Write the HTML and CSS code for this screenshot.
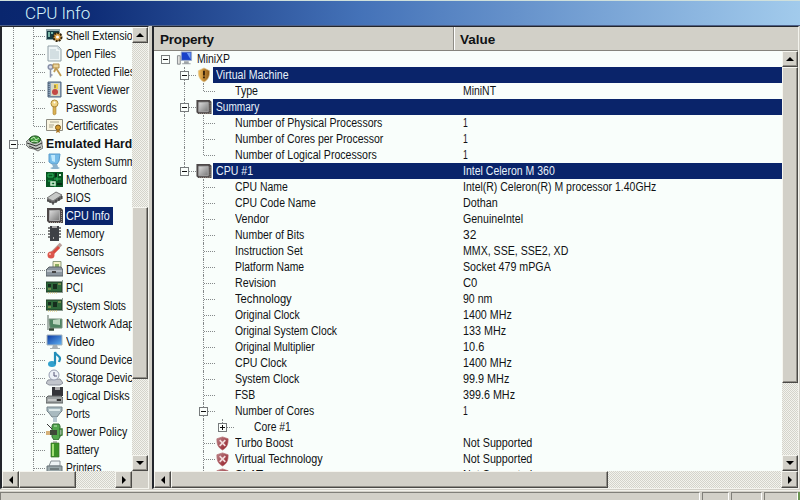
FILE: index.html
```html
<!DOCTYPE html>
<html lang="en">
<head>
  <meta charset="UTF-8" />
  <title>CPU Info</title>
  <link rel="stylesheet" href="styles.css">
</head>
<body>
  <!-- Icon set -->
  <svg class="defs" width="0" height="0">
    <defs>
      <linearGradient id="steel" x2="1" y2="1"><stop stop-color="#ddd"/><stop offset="1" stop-color="#777"/></linearGradient>
      <linearGradient id="blue" x2="1" y2="1"><stop stop-color="#0c38a0"/><stop offset="1" stop-color="#62b4f4"/></linearGradient>
      <linearGradient id="gold" x2="1"><stop stop-color="#f4bd5a"/><stop offset="1" stop-color="#8d5614"/></linearGradient>
      <linearGradient id="red" x2="1" y2="1"><stop stop-color="#b9868c"/><stop offset="1" stop-color="#941820"/></linearGradient>
    </defs>
    <symbol id="shell" viewBox="0 0 17 17"><path d="M0 2h14v11H0z" fill="#8fa5a8"/><path d="M1 4h12v8H1z" fill="#173c42"/><path d="M2 5h2v5H2zM5 5h2v2H5z" fill="#79b6a6"/><circle cx="11.5" cy="10" r="4" fill="#dba047" stroke="#33250d" stroke-width="2" stroke-dasharray="2 1"/><circle cx="11.5" cy="10" r="1.5" fill="#fff"/></symbol>
    <symbol id="files" viewBox="0 0 17 17"><path d="M2 1h10l3 3v12H2z" fill="#eef5f6" stroke="#91a0a6"/><path d="M12 1v3h3M4 5h6M4 7h9M4 9h9M4 11h9M4 13h9" fill="none" stroke="#b8c8ce"/></symbol>
    <symbol id="keys" viewBox="0 0 17 17"><circle cx="4.500" cy="4" r="2.300" fill="#d8dcea" stroke="#8790a8" stroke-width="1.500"/><path d="M4.500 6.500v8M4.500 12h2" stroke="#8790a8" stroke-width="1.500"/><path d="M7 1h6v4H7z" fill="#ead49a" stroke="#b18c48"/><path d="M10 5l5 8M10 5l-2 4" stroke="#c09a50" stroke-width="1.800"/></symbol>
    <symbol id="event" viewBox="0 0 17 17"><path d="M2 1h13v15H2z" fill="#8fa6bd" stroke="#50667f"/><path d="M5 2h9v13H5z" fill="#d9d9c5"/><path d="M3 2v13" stroke="#34445d" stroke-dasharray="1 1"/><path d="M8 3h4v5H8z" fill="#efd14d"/><circle cx="9" cy="11" r="3" fill="#c34845"/><path d="M9 4v3" stroke="#555"/></symbol>
    <symbol id="key" viewBox="0 0 17 17"><circle cx="8.500" cy="4.500" r="3.500" fill="#f0d484" stroke="#ad8a3c"/><path d="M7 8h3v7l-2 1-1-1z" fill="#d9b254" stroke="#a98232" stroke-width=".6"/><circle cx="8.500" cy="3.500" r="1" fill="#fff"/></symbol>
    <symbol id="cert" viewBox="0 0 17 17"><path d="M.5 2.500h16v11H.5z" fill="#f9f4df" stroke="#8d8c81"/><path d="M4 5h9M3 8h5M3 10h4" stroke="#aaa58e"/><circle cx="12" cy="10.500" r="2.500" fill="#d59b2f" stroke="#7b571a"/><path d="M11 12l-1 4 2-1 2 1-1-4" fill="#a97522"/></symbol>
    <symbol id="hardware" viewBox="0 0 17 17"><path d="M0 7l4-4h10l2 4v3l1 3-5 3-4-2-5-1-3-3z" fill="#c3c9c3" stroke="#555" stroke-width=".8"/><path d="M1 8l9 3 6-3M3 11l7 3 5-2" fill="none" stroke="#333"/><ellipse cx="9" cy="4.500" rx="5.500" ry="3.600" fill="#3f9a3a" stroke="#225522"/><path d="M5 4l3-2 2 3 3-2M5 7l3-1 4 1" fill="none" stroke="#c7e8be"/></symbol>
    <symbol id="summary" viewBox="0 0 17 17"><path d="M3 1h11l-1 7-2 3H6L3 9z" fill="#76bce9" stroke="#5a9ccb"/><path d="M5 2h4v7L6 8z" fill="#bfe9fd"/><path d="M6 11h5l1 3 2 1-2 1H6l-2-1 3-1z" fill="#8bb2cd"/></symbol>
    <symbol id="board" viewBox="0 0 17 17"><path d="M0 1h17v15H0z" fill="#075622"/><path d="M2 3h5v3H2zM11 2v8M8 8h7M2 10h4v4M9 13v3" fill="none" stroke="#2bb259"/><path d="M5 11h4v3H5z" fill="none" stroke="#ccebd0" stroke-width="1.500"/><path d="M13 3h2v2h-2z" fill="#ccebd0"/><path d="M9 2h2v4H9zM11 12h5v2h-5z" fill="#042c14"/></symbol>
    <symbol id="bios" viewBox="0 0 17 17"><path d="M1 10L10 4l6 2v4L7 15l-6-3z" fill="#666"/><path d="M1 9l9-6 6 3-9 6z" fill="#c7c9c7" stroke="#777"/><path d="M2 11v2M4 12v2M7 13v3M10 11v3M13 9v3M16 7v3" stroke="#333"/></symbol>
    <symbol id="cpu" viewBox="0 0 17 17"><path d="M1 1h14l2 2v13H3l-2-2z" fill="#4d4848"/><path d="M15.500 4v11M4 15.500h11" stroke="#a59a90" stroke-dasharray="1 1"/><path d="M3.500 3.500h10v10h-10z" fill="url(#steel)" stroke="#aaa"/></symbol>
    <symbol id="memory" viewBox="0 0 17 17"><path d="M4 1h9v15H4z" fill="#3e4145"/><path d="M2 3h2M2 6h2M2 9h2M2 12h2M13 3h2M13 6h2M13 9h2M13 12h2" stroke="#555" stroke-width="1.500"/><path d="M6 1h5v2H6zM7 12h1v2H7z" fill="#aaa"/></symbol>
    <symbol id="sensor" viewBox="0 0 17 17"><path d="M15 1L6 10" stroke="#b9a09a" stroke-width="3.500"/><path d="M13 4l-7 7" stroke="#da4a3e" stroke-width="3"/><circle cx="5" cy="12" r="3.500" fill="#db574d"/><circle cx="4" cy="11" r="1" fill="#ffc0b0"/></symbol>
    <symbol id="device" viewBox="0 0 17 17"><path d="M7 .5h8v8H7z" fill="#f4f2c8" stroke="#8b9b7d"/><path d="M9 3h4v3H9z" fill="#8bac60"/><path d="M1 8l2-2h12l2 3v6H0V9z" fill="#8b969f" stroke="#5b6268"/><path d="M1 10h15" stroke="#e4e8ed"/><path d="M6 10h4v2H6z" fill="#444"/></symbol>
    <symbol id="card" viewBox="0 0 17 17"><path d="M0 3h16v10H0z" fill="#2d683a" stroke="#203b26"/><path d="M2 5h3v3H2zM7 5h4v5H7z" fill="#162d1d"/><path d="M12 5h3M2 10h3" stroke="#bcae62"/><path d="M2 14h10" stroke="#d9c471" stroke-dasharray="1 1"/><path d="M16.500 1v13" stroke="#8d9a93"/></symbol>
    <symbol id="net" viewBox="0 0 17 17"><path d="M2 0v15" stroke="#8c9a93" stroke-width="1.500"/><path d="M3 4h13v9H4z" fill="#4f8462" stroke="#79917f"/><path d="M7 5l7-1v6l-7-1z" fill="#b9d4bd"/><path d="M3 14.500h5" stroke="#343" stroke-width="2.500"/></symbol>
    <symbol id="video" viewBox="0 0 17 17"><path d="M1 2h15v10H1z" fill="url(#blue)" stroke="#a5b3bb"/><path d="M7 12h4l1 3h2v1H4v-1h2z" fill="#a7b0b4"/></symbol>
    <symbol id="sound" viewBox="0 0 17 17"><ellipse cx="6" cy="13" rx="4" ry="3" fill="#30a1ce"/><path d="M9 13V1c1 4 5 3 5 7l-1 3" fill="none" stroke="#238eb9" stroke-width="2.200"/></symbol>
    <symbol id="storage" viewBox="0 0 17 17"><path d="M2 11l12-1 3 4-3 2H3l-3-2z" fill="#c2c6cc" stroke="#8b909b"/><circle cx="8" cy="6" r="5" fill="#edf1f8" stroke="#979eb2"/><path d="M8 3v4h3" stroke="#557" fill="none"/></symbol>
    <symbol id="disk" viewBox="0 0 17 17"><path d="M6 0h11v9H6z" fill="#343539"/><path d="M9 0h5v3H9z" fill="#aaa"/><path d="M0 11l2-2h13l2 2v5H0z" fill="#9da2a2" stroke="#5c6161"/><path d="M2 13h8" stroke="#eee"/><path d="M11 12h4v2h-4z" fill="#333"/></symbol>
    <symbol id="port" viewBox="0 0 17 17"><path d="M1 2h15v4l-2 2-3 4H6L3 8 1 6z" fill="#a8bac0" stroke="#76858b"/><path d="M3 4h11v2H3z" fill="#dce8e9"/><path d="M7 12h4v5H7z" fill="#b4c6cf"/></symbol>
    <symbol id="power" viewBox="0 0 17 17"><path d="M7 1h6l1 2v11l-2 3H8l-2-3V3z" fill="#51a64d" stroke="#326b34"/><path d="M13 6h3v6l-3 1" fill="none" stroke="#397b35" stroke-width="1.500"/><path d="M0 8h5v4H0z" fill="#d6b179"/><path d="M1 1l5 5" stroke="#333"/><path d="M4 7h7v5H4z" fill="#3e4839"/><path d="M8 3h3" stroke="#c4e7bd"/></symbol>
    <symbol id="battery" viewBox="0 0 17 17"><path d="M7 0h4v2H7z" fill="#bbb"/><path d="M5 2h8v14H5z" fill="#3b9228" stroke="#397028" stroke-width=".7"/><path d="M7 3v12" stroke="#a2df76" stroke-width="2"/></symbol>
    <symbol id="printer" viewBox="0 0 17 17"><path d="M5 2h9v5H3z" fill="#edf3f4" stroke="#899196"/><path d="M1 7h15v6H1z" fill="#9aa7aa" stroke="#687478"/><path d="M4 10h9" stroke="#465153"/></symbol>
    <symbol id="computer" viewBox="0 0 17 17"><path d="M1 5h3v9H1z" fill="#e2e2df" stroke="#84898c"/><path d="M5 1h11v9H5z" fill="#1841c9" stroke="#9dabc5"/><path d="M11 2h4v7z" fill="#6e9cf5"/><path d="M8 11h5v2h2v1H6v-1h2z" fill="#9da3a7"/></symbol>
    <symbol id="guard" viewBox="0 0 17 17"><path d="M9 1l6 3c0 6-1 9-6 12C4 13 3 10 3 4z" fill="url(#gold)" stroke="#dfc58c" stroke-width=".7"/><path d="M9 4v5M9 10v2" stroke="#38220b" stroke-width="2"/></symbol>
    <symbol id="deny" viewBox="0 0 17 17"><path d="M8.500 2l6 2c0 6-1 9-6 12-5-3-6-6-6-12z" fill="url(#red)" stroke="#b46b6f" stroke-width=".7"/><path d="M5.500 5.500l6 6M11.500 5.500l-6 6" stroke="#f3dcdc" stroke-width="1.700"/></symbol>
  </svg>

  <div class="titlebar"><h1>CPU Info</h1></div>

  <div class="main">
    <div class="panel side">
      <div class="pane">
        <div class="tree" id="nav"></div>
        <div class="vbar">
          <button class="up"></button><div class="thumb"></div><button class="down"></button>
        </div>
      </div>
      <div class="hbar">
        <button class="left"></button><div class="thumb"></div><button class="right"></button><div class="corner"></div>
      </div>
    </div>

    <div class="panel details">
      <div class="head"><div class="col-name">Property</div><div class="col-value">Value</div></div>
      <div class="pane">
        <div class="tree" id="props"></div>
        <div class="vbar">
          <button class="up"></button><div class="thumb"></div><button class="down"></button>
        </div>
      </div>
      <div class="hbar">
        <button class="left"></button><div class="thumb"></div><button class="right"></button>
      </div>
    </div>
  </div>

  <div class="status"><div></div><div></div><div></div><div></div><i></i></div>

  <script src="tree.js"></script>
</body>
</html>
```
FILE: styles.css
```css
* {
  box-sizing: border-box;
}
body {
  margin: 0;
  width: 800px;
  height: 500px;
  overflow: hidden;
  background: #d2d0c8;
  color: #101214;
  font-family: "Liberation Sans", sans-serif;
  font-size: 12px;
  display: flex;
  flex-direction: column;
}
.defs {
  position: absolute;
}
.titlebar {
  flex: none;
  height: 26px;
  border-top: 1px solid #cfe0dc;
  border-bottom: 1px solid #4c5f88;
  background: linear-gradient(to right, #09266e, #0c2a74 10%, #4472b8 45%, #78a3d5 75%, #a2cbec);
}
.titlebar h1 {
  margin: 0;
  padding-left: 25px;
  font-family: Roboto, sans-serif;
  font-size: 17px;
  line-height: 24px;
  font-weight: 300;
  letter-spacing: -0.1px;
  color: #d4f3fb;
}
.main {
  display: flex;
  gap: 3px;
  height: 464px;
}
.panel {
  display: flex;
  flex-direction: column;
  border: 1px solid #23262c;
  border-width: 1px 1px 1px 2px;
  border-right-color: #f4f4ee;
  border-bottom-color: #f4f4ee;
  height: 463px;
}
.side {
  width: 149px;
}
.details {
  width: 647px;
}
.pane {
  display: flex;
  flex: 1;
  min-height: 0;
}
.tree {
  flex: 1;
  min-width: 0;
  overflow: hidden;
  background: #f9fefb;
}

/* column header */
.head {
  display: flex;
  flex: none;
  height: 24px;
  background: #d2d0c8;
  border-bottom: 1px solid #85837c;
  font-size: 13.5px;
  font-weight: 700;
  line-height: 25px;
}
.col-name {
  width: 300px;
  padding-left: 6px;
  letter-spacing: -0.2px;
  border-right: 1px solid #8e8c86;
}
.col-value {
  flex: 1;
  padding-left: 5px;
  border-left: 1px solid #fff;
}

/* rows */
.row {
  display: flex;
  white-space: nowrap;
}
#nav .row {
  height: 18px;
  line-height: 18px;
  width: 260px;
  padding-left: 2px;
}
#props .row {
  height: 16px;
  line-height: 16px;
}
#props .name {
  display: flex;
  width: 299px;
  padding-left: 2px;
}
.cell {
  position: relative;
  flex: none;
  width: 19px;
}
#nav .cell {
  width: 20px;
}
.cell.v::before,
.cell.t::before,
.cell.l::before {
  content: "";
  position: absolute;
  left: 9px;
  top: 0;
  bottom: 0;
  border-left: 1px dotted #85898a;
}
.cell.l::before {
  bottom: 50%;
}
.cell.t::after,
.cell.l::after {
  content: "";
  position: absolute;
  left: 10px;
  right: -2px;
  top: 8px;
  border-top: 1px dotted #85898a;
}
#nav .cell.t::after,
#nav .cell.l::after {
  top: 9px;
  right: -1px;
}
.box {
  position: absolute;
  left: 5px;
  top: 4px;
  width: 9px;
  height: 9px;
  border: 1px solid #777b7c;
  background: #fafefb;
  z-index: 1;
}
#nav .box {
  top: 5px;
}
.box::before,
.box.plus::after {
  content: "";
  position: absolute;
  left: 1px;
  top: 3px;
  width: 5px;
  height: 1px;
  background: #111;
}
.box.plus::after {
  transform: rotate(90deg);
}
.icon {
  flex: none;
  width: 19px;
  height: 16px;
  padding: 0 1px;
  position: relative;
}
#nav .icon {
  width: 17px;
  height: 17px;
  margin: 0 2px;
  padding: 0;
}
.label {
  padding: 0 3px;
}
#nav .label {
  padding: 0 3px 0 1px;
}
#nav .selected .label {
  background: #0a246a;
  color: #f0f7ff;
}
#nav .bold .label {
  font-weight: 700;
}
#props .label {
  flex: 1;
}
.value {
  flex: 1;
  padding-left: 10px;
}
.band .label,
.band .value {
  background: #0a246a;
  color: #e8f2fb;
}
.label span,
.value span {
  display: inline-block;
  transform-origin: left center;
}

/* scrollbars */
.vbar,
.hbar {
  flex: none;
  display: flex;
  background: repeating-conic-gradient(#d4d3cb 0 25%, #f2f3ed 0 50%) 0 0 / 2px 2px;
}
.vbar {
  width: 16px;
  flex-direction: column;
}
.hbar {
  height: 17px;
}
.vbar button,
.hbar button,
.thumb {
  flex: none;
  margin: 0;
  padding: 0;
  border: 1px solid #f6f6f0;
  border-right-color: #4b4a47;
  border-bottom-color: #4b4a47;
  box-shadow: inset -1px -1px #918f88;
  background: #d2d0c8;
}
.vbar button {
  height: 16px;
}
.hbar button {
  width: 17px;
}
button {
  display: flex;
  align-items: center;
  justify-content: center;
}
button::before {
  content: "";
  border: 4px solid transparent;
}
.up::before {
  border-top: 0;
  border-bottom-color: #000;
}
.down::before {
  border-bottom: 0;
  border-top-color: #000;
}
.left::before {
  border-left: 0;
  border-right-color: #000;
}
.right::before {
  border-right: 0;
  border-left-color: #000;
}
.vbar .down {
  margin-top: auto;
}
.hbar .right {
  margin-left: auto;
}
.side .vbar .thumb {
  height: 172px;
  margin-top: 164px;
}
.side .hbar .thumb {
  width: 57px;
}
.corner {
  width: 16px;
  background: #d2d0c8;
}
.details .vbar .thumb {
  height: 316px;
}
.details .hbar .thumb {
  width: 437px;
}

/* status bar */
.status {
  display: flex;
  gap: 2px;
  height: 10px;
  padding-top: 1px;
  border-top: 1px solid #f2f1eb;
}
.status div {
  flex: none;
  border: 1px solid #807f79;
  border-right-color: #fff;
  border-bottom: 0;
}
.status div:nth-child(1) { width: 700px; }
.status div:nth-child(2) { width: 27px; }
.status div:nth-child(3) { width: 31px; }
.status div:nth-child(4) { width: 34px; }
.status i {
  width: 2px;
  margin-left: -2px;
  background: #6d9652;
}
```
FILE: tree.js
```js
// icon, text, text width
const nav = [
  ["shell", "Shell Extensions", 78],
  ["files", "Open Files", 50],
  ["keys", "Protected Files", 69],
  ["event", "Event Viewer", 63],
  ["key", "Passwords", 51],
  ["cert", "Certificates", 52],
  ["hardware", "Emulated Hardware", 114],
  ["summary", "System Summary", 85],
  ["board", "Motherboard", 61],
  ["bios", "BIOS", 25],
  ["cpu", "CPU Info", 44],
  ["memory", "Memory", 38],
  ["sensor", "Sensors", 38],
  ["device", "Devices", 40],
  ["card", "PCI", 17],
  ["card", "System Slots", 60],
  ["net", "Network Adapters", 87],
  ["video", "Video", 28],
  ["sound", "Sound Devices", 72],
  ["storage", "Storage Devices", 78],
  ["disk", "Logical Disks", 64],
  ["port", "Ports", 24],
  ["power", "Power Policy", 61],
  ["battery", "Battery", 33],
  ["printer", "Printers", 35]
];

// cells, text, width, value, value width
// v/t/l = lines, - = collapse box, + = expand box, _ = empty, anything else = icon
const props = [
  ["- computer", "MiniXP", 33],
  ["_ v- guard", "Virtual Machine", 73],
  ["_ v l _", "Type", 23, "MiniNT", 33],
  ["_ v- cpu", "Summary", 43],
  ["_ v t _", "Number of Physical Processors", 147, "1", 5],
  ["_ v t _", "Number of Cores per Processor", 148, "1", 5],
  ["_ v l _", "Number of Logical Processors", 142, "1", 5],
  ["_ l- cpu", "CPU #1", 37, "Intel Celeron M 360", 92],
  ["_ _ t _", "CPU Name", 53, "Intel(R) Celeron(R) M processor 1.40GHz", 193],
  ["_ _ t _", "CPU Code Name", 81, "Dothan", 35],
  ["_ _ t _", "Vendor", 34, "GenuineIntel", 60],
  ["_ _ t _", "Number of Bits", 69, "32", 13],
  ["_ _ t _", "Instruction Set", 68, "MMX, SSE, SSE2, XD", 105],
  ["_ _ t _", "Platform Name", 69, "Socket 479 mPGA", 88],
  ["_ _ t _", "Revision", 41, "C0", 14],
  ["_ _ t _", "Technology", 57, "90 nm", 29],
  ["_ _ t _", "Original Clock", 65, "1400 MHz", 49],
  ["_ _ t _", "Original System Clock", 102, "133 MHz", 43],
  ["_ _ t _", "Original Multiplier", 80, "10.6", 21],
  ["_ _ t _", "CPU Clock", 52, "1400 MHz", 49],
  ["_ _ t _", "System Clock", 64, "99.9 MHz", 46],
  ["_ _ t _", "FSB", 20, "399.6 MHz", 52],
  ["_ _ t- _", "Number of Cores", 79, "1", 5],
  ["_ _ v l+ _", "Core #1", 37],
  ["_ _ t deny", "Turbo Boost", 58, "Not Supported", 69],
  ["_ _ t deny", "Virtual Technology", 88, "Not Supported", 69],
  ["_ _ t deny", "SLAT", 28, "Not Supported", 69]
];

const icon = name => `<svg class="icon"><use href="#${name}"/></svg>`;
const text = (t, w) => t ? `<span data-w="${w}">${t}</span>` : "";

function cell(c) {
  if (c.length > 2) return icon(c);
  const line = c.replace(/[-+_]/, "");
  const box = c.includes("-") ? '<i class="box"></i>' : c.includes("+") ? '<i class="box plus"></i>' : "";
  return `<span class="cell ${line}${box && line === "v" ? " t" : ""}">${box}</span>`;
}

document.getElementById("nav").innerHTML = nav.map(([ic, t, w], i) => {
  let cls = "row", cells = '<span class="cell v"></span><span class="cell v t"></span>';
  if (i === 5) cells = '<span class="cell v"></span><span class="cell l"></span>';
  if (i === 6) {
    cls += " bold";
    cells = '<span class="cell v t"><i class="box"></i></span>';
  }
  if (i === 10) cls += " selected";
  return `<div class="${cls}">${cells}${icon(ic)}<span class="label">${text(t, w)}</span></div>`;
}).join("");

document.getElementById("props").innerHTML = props.map(([cells, t, w, v, vw]) => {
  const band = /guard|cpu/.test(cells) ? " band" : "";
  return `<div class="row${band}"><div class="name">${cells.split(" ").map(cell).join("")}<span class="label">${text(t, w)}</span></div><div class="value">${text(v, vw)}</div></div>`;
}).join("");

document.querySelectorAll("[data-w]").forEach(el => {
  const w = el.offsetWidth;
  el.style.transform = `scaleX(${el.dataset.w / w})`;
  el.style.marginRight = el.dataset.w - w + "px";
});
```
